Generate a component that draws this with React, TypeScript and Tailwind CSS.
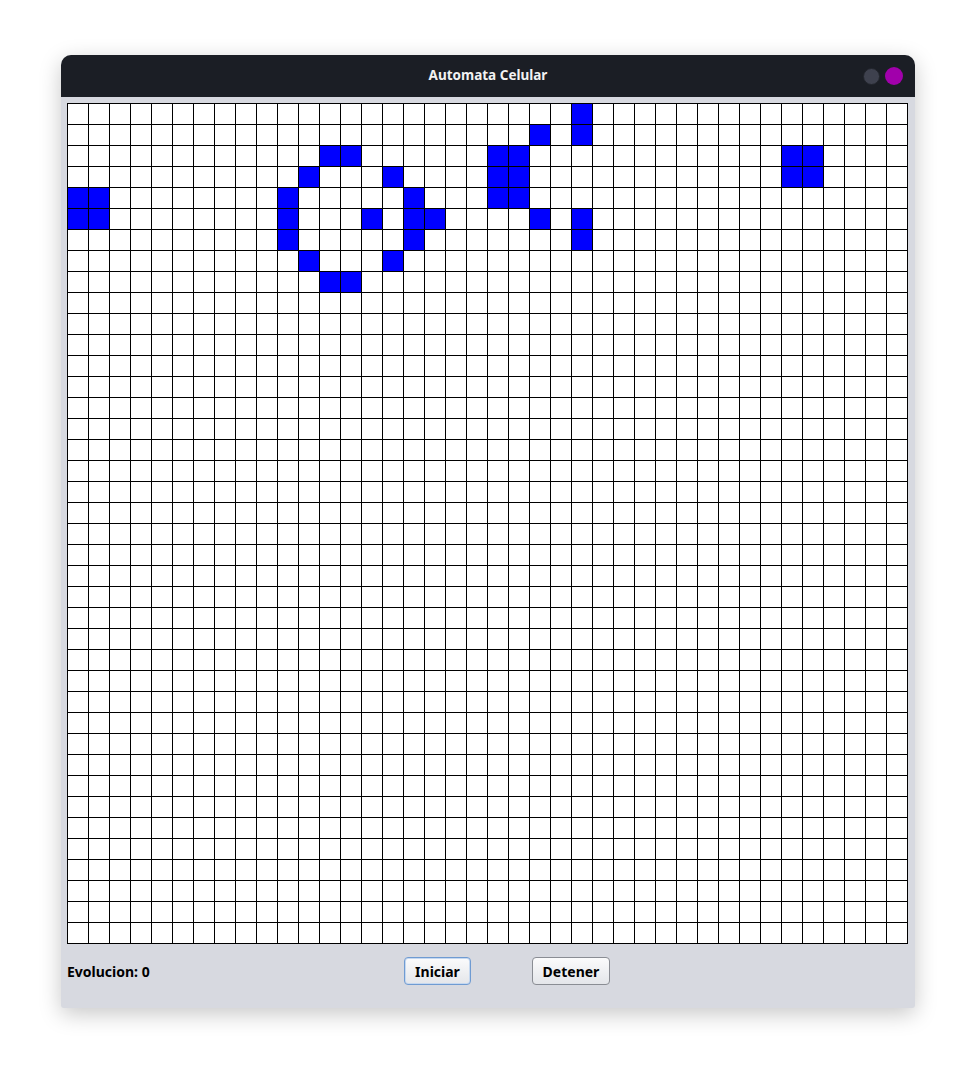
import React from 'react';

const COLS = 40;
const ROWS = 40;

// live cells as [col, row]
const alive: [number, number][] = [
  [0, 4], [1, 4], [0, 5], [1, 5],
  [12, 2], [13, 2], [11, 3], [15, 3], [10, 4], [16, 4],
  [10, 5], [14, 5], [16, 5], [17, 5], [10, 6], [16, 6],
  [11, 7], [15, 7], [12, 8], [13, 8],
  [24, 0], [22, 1], [24, 1], [20, 2], [21, 2], [20, 3], [21, 3],
  [20, 4], [21, 4], [22, 5], [24, 5], [24, 6],
  [34, 2], [35, 2], [34, 3], [35, 3],
];

const liveSet = new Set(alive.map(([c, r]) => `${c},${r}`));

function Board() {
  const cells = [];
  for (let r = 0; r < ROWS; r++) {
    for (let c = 0; c < COLS; c++) {
      const on = liveSet.has(`${c},${r}`);
      cells.push(
        <div key={`${c}-${r}`} className={on ? 'h-5 w-5 bg-[#0000ff]' : 'h-5 w-5 bg-white'} />
      );
    }
  }
  return (
    <div className="grid w-[841px] grid-cols-[repeat(40,20px)] gap-px bg-black p-px">{cells}</div>
  );
}

export default function App() {
  return (
    <div
      className="min-h-[1075px] bg-white pl-[61px] pt-[55px]"
      style={{ fontFamily: '"Noto Sans", "Open Sans", sans-serif' }}
    >
      <div className="w-[854px] overflow-hidden rounded-t-[10px] rounded-b-[3px] bg-[#d7d9e0] shadow-[0_6px_22px_rgba(0,0,0,0.22)]">
        {/* Title bar */}
        <div className="relative flex h-[42px] items-center justify-center bg-[#1b1e25] pb-[1px]">
          <span className="text-[13.5px] font-bold text-[#f2f2f2]">Automata Celular</span>
          <div className="absolute right-[12px] top-[12px] flex items-center gap-[5px]">
            <span className="h-[17px] w-[17px] rounded-full border border-[#22252c] bg-[#3e414e]" />
            <span className="h-[18px] w-[18px] rounded-full bg-[#a100ab]" />
          </div>
        </div>

        {/* Grid */}
        <div className="pl-[6px] pt-[6px]">
          <Board />
        </div>

        {/* Controls */}
        <div className="flex h-[54px] items-center py-[10px] pl-[6px]">
          <span className="w-[337px] text-[14px] font-bold text-black">Evolucion: 0</span>
          <button className="h-[28px] w-[67px] rounded-[4px] border border-[#6f9bd2] bg-gradient-to-b from-[#fbfbfc] to-[#e4e6ea] text-[14px] font-bold text-black shadow-[inset_0_0_0_1px_#c5d8f0]">
            Iniciar
          </button>
          <button className="ml-[61px] h-[28px] w-[78px] rounded-[4px] border border-[#8a8d94] bg-gradient-to-b from-[#fbfbfc] to-[#e4e6ea] text-[14px] font-bold text-black">
            Detener
          </button>
        </div>
        <div className="h-[10px]" />
      </div>
    </div>
  );
}
